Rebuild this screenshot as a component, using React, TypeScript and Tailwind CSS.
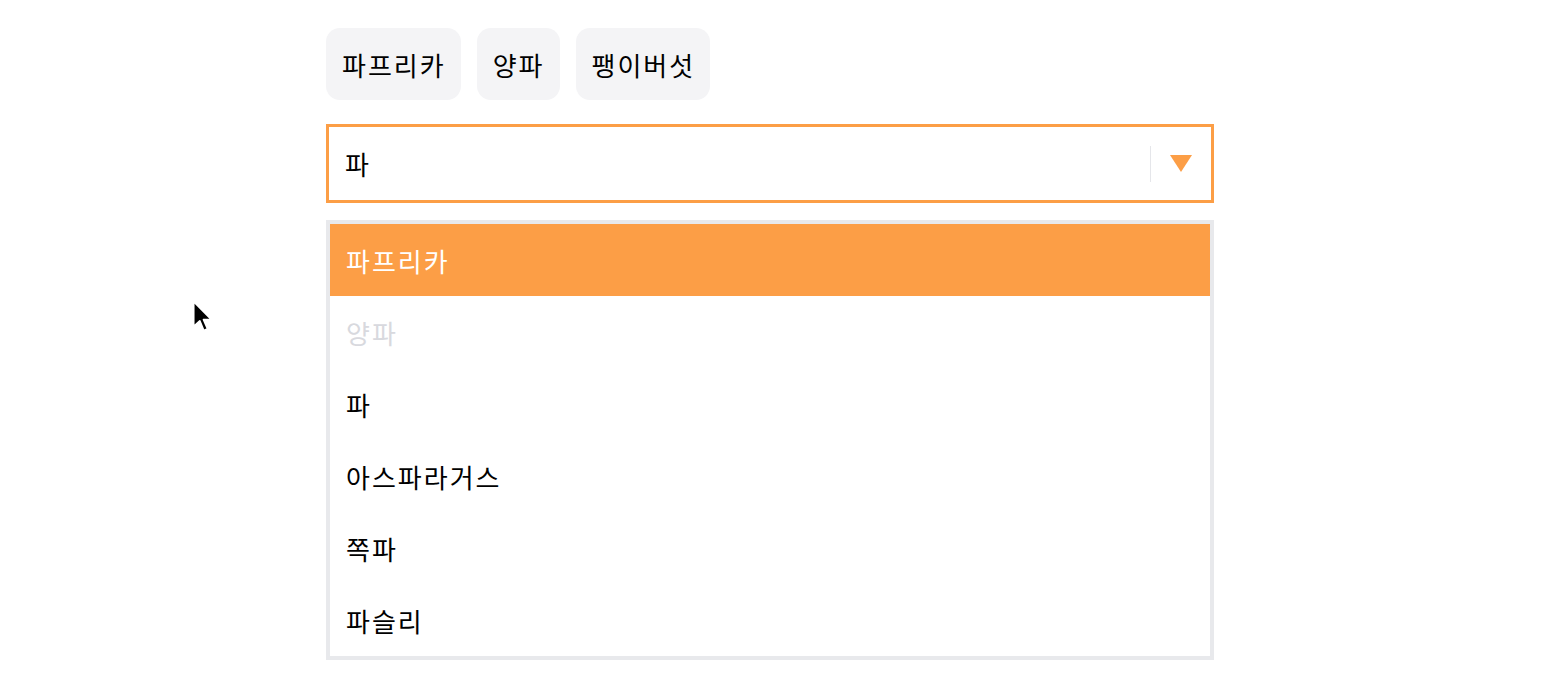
import React from "react";

const chips = ["파프리카", "양파", "팽이버섯"];
const options = [
  { label: "파프리카", state: "active" },
  { label: "양파", state: "disabled" },
  { label: "파", state: "normal" },
  { label: "아스파라거스", state: "normal" },
  { label: "쪽파", state: "normal" },
  { label: "파슬리", state: "normal" },
];

export default function App() {
  return (
    <div
      className="relative w-[1546px] h-[696px] bg-white overflow-hidden"
      style={{ fontFamily: '"Noto Sans CJK KR", "Noto Sans", sans-serif' }}
    >
      <div className="ml-[326px] w-[888px] pt-[28px]">
        <div className="flex gap-4">
          {chips.map((c) => (
            <div
              key={c}
              className="h-[72px] pl-4 pr-[15px] flex items-center rounded-[14px] bg-[#f4f4f6] text-[26px] tracking-[2px] font-normal text-black"
            >
              {c}
            </div>
          ))}
        </div>

        <div className="mt-6 h-[79px] border-[3px] border-[#fc9e46] flex items-center">
          <div className="flex-1 pl-4 text-[26px] tracking-[2px] font-normal text-black">파</div>
          <div className="w-px h-[36px] bg-[#e5e6ea]" />
          <div className="px-[19px] flex items-center">
            <svg width="22" height="17" viewBox="0 0 22 17">
              <path d="M0 0 L22 0 L11 17 Z" fill="#fc9e46" />
            </svg>
          </div>
        </div>

        <div className="mt-[17px] border-4 border-[#e8e9ec]">
          {options.map((o) => (
            <div
              key={o.label}
              className={
                o.state === "active"
                  ? "h-[72px] pl-4 flex items-center text-[26px] tracking-[2px] font-normal bg-[#fc9e46] text-white"
                  : o.state === "disabled"
                  ? "h-[72px] pl-4 flex items-center text-[26px] tracking-[2px] font-normal text-[#d8d9de]"
                  : "h-[72px] pl-4 flex items-center text-[26px] tracking-[2px] font-normal text-black"
              }
            >
              {o.label}
            </div>
          ))}
        </div>
      </div>

      <svg
        className="absolute left-[192px] top-[300px]"
        width="22"
        height="34"
        viewBox="0 0 13 20"
      >
        <path
          d="M1 1 L1 15.5 L4.6 12.3 L7 18 L9.2 17 L6.8 11.5 L11.5 11.5 Z"
          fill="#000"
          stroke="#fff"
          strokeWidth="1"
          strokeLinejoin="round"
        />
      </svg>
    </div>
  );
}
